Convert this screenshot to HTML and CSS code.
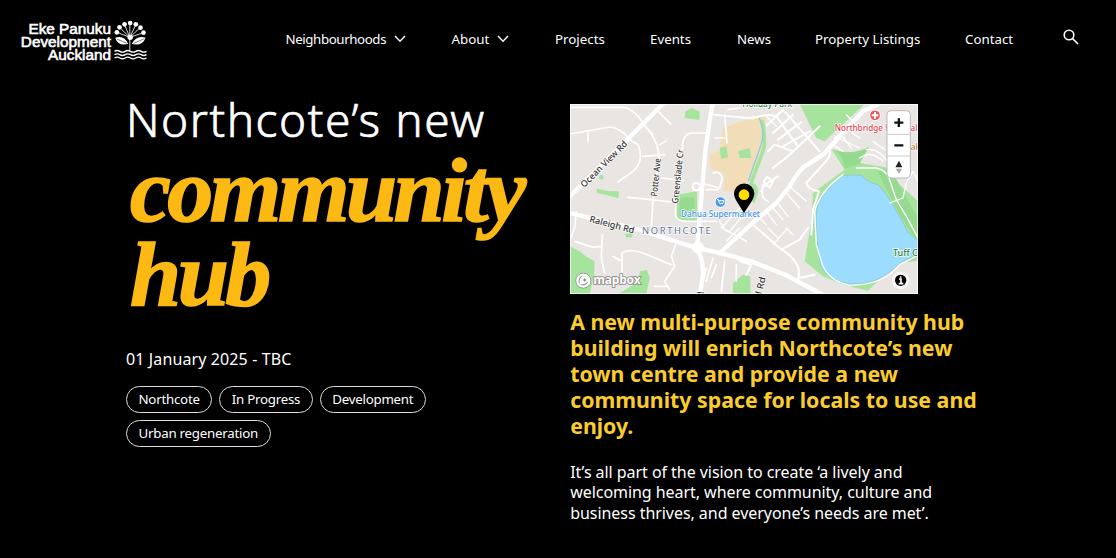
FILE: index.html
```html
<!DOCTYPE html>
<html lang="en">
<head>
<meta charset="utf-8">
<title>Northcote’s new community hub</title>
<link rel="stylesheet" href="styles.css">
</head>
<body>
<header class="header">
  <a class="logo">
    <span class="logo-text">Eke Panuku<br>Development<br>Auckland</span>
    <svg class="logo-mark" viewBox="344 60 98 120" fill="none" stroke="#fff">
      <g stroke-width="2.5"><path d="M391 150V112M391 112L353 97M391 112L361 83M391 112L375 74M391 112V70M391 112L409 74M391 112L422 83M391 112L432 98"/></g>
      <g fill="#fff" stroke="none"><circle cx="352" cy="97" r="7"/><circle cx="360" cy="82" r="7"/><circle cx="375" cy="73" r="7"/><circle cx="392" cy="69" r="7"/><circle cx="409" cy="73" r="7"/><circle cx="423" cy="83" r="7"/><circle cx="432" cy="98" r="7"/><circle cx="392" cy="112" r="8"/>
      <path d="M347 113Q375 105 386 132Q355 139 347 113ZM438 113Q410 105 397 132Q429 139 438 113Z"/></g>
      <path stroke="#000" stroke-width="1.5" d="M352 117L382 130M433 117L402 130"/>
      <g stroke-width="4"><path id="wave" d="M345 154Q353 149 361 154T377 154T393 154T409 154T425 154T441 154"/><use href="#wave" y="10"/><use href="#wave" y="20"/></g>
    </svg>
  </a>
  <nav class="nav">
    <a><span class="nav-long">Neighbourhoods</span> <svg class="chevron" viewBox="0 0 12 8"><path d="M1 1L6 6.3L11 1"/></svg></a>
    <a>About <svg class="chevron" viewBox="0 0 12 8"><path d="M1 1L6 6.3L11 1"/></svg></a>
    <a>Projects</a>
    <a>Events</a>
    <a>News</a>
    <a>Property Listings</a>
    <a>Contact</a>
  </nav>
  <svg class="search" viewBox="0 0 16 16"><circle cx="6" cy="6" r="4.8"/><path d="M9.6 9.6L15 15"/></svg>
</header>
<main class="hero">
  <section class="intro">
    <h1 class="title"><span class="title-top">Northcote’s new</span><em class="title-accent">community<br>hub</em></h1>
    <p class="date">01 January 2025 - TBC</p>
    <ul class="tags"><li>Northcote</li><li>In Progress</li><li>Development</li><li>Urban regeneration</li></ul>
  </section>
  <section class="details">
    <svg class="map" viewBox="31 28 1044 570">
      <rect x="31" y="28" width="1044" height="570" fill="#e9e5e3"/>
      <g fill="#f1deb9"><path d="M490 100L545 80L620 60L605 200L560 265L520 290L490 290L495 240L450 220L450 180L480 165Z"/></g>
      <g fill="#a6e39c">
        <path d="M378 50L398 40L420 52L419 76L375 70Z"/><path d="M352 300L412 290L412 380L352 375Z"/>
        <path d="M110 282L150 290L178 290L176 310L112 294Z"/><circle cx="125" cy="248" r="7"/><path d="M198 416h20v12h-20z"/>
        <path d="M31 455L60 470L78 485L105 500L103 545L90 598L31 598Z"/><path d="M176 598L230 565L242 530L262 526L270 550L260 598Z"/>
        <path d="M480 160L500 154L505 188L485 193ZM535 170L570 160L575 190L540 190Z"/>
        <path d="M720 28H915L795 140L770 130Z"/><path d="M815 163Q880 185 930 155L900 205L990 220L1020 270L1075 320V440L1070 500L1010 505L925 588L850 570L790 545L735 500L755 380L760 295L855 225Z"/>
        <path d="M520 565L550 540L572 545V598H520Z"/>
        <path d="M600 80Q618 115 604 170L570 260L562 310L585 325L596 290L590 270L580 265L619 160Q622 100 610 75Z"/>
      </g>
      <g fill="#95da8e"><path d="M815 163Q850 175 855 222L900 207L925 160Q870 185 815 163ZM955 232L990 220L1075 370V445L1020 360Z"/><path d="M360 308h44v56h-44z"/></g>
      <path d="M599 70Q617 115 604 150L566 260" fill="none" stroke="#8dccdf" stroke-width="4"/>
      <path d="M775 330Q785 295 850 242L905 241Q925 265 955 270Q995 315 1010 350Q1030 380 1043 410L1075 440V480Q1030 495 1010 515Q960 570 870 568Q800 555 782 510Q768 420 770 360Z" fill="#9cddff" stroke="#87bce0" stroke-width="2"/>
      <g fill="none" stroke="#fff" stroke-linecap="round" stroke-linejoin="round">
        <g stroke-width="5">
          <path d="M31 38H190Q225 42 255 92Q300 140 298 200L290 260L280 320L275 395M258 98L280 120M300 150L320 138M290 45L333 88M31 118L150 97Q185 100 210 135L235 150Q255 200 220 230L175 262M85 108V140M250 185L315 180M305 250L370 258M440 115H390Q365 125 368 170L350 260L347 360Q350 380 380 380H470M205 308L340 322M50 350L45 400L31 435M128 420L125 490L135 535M45 440L100 458L126 455M348 450L335 485L345 515L315 560L330 585M187 535V475Q210 460 250 475L335 510M187 500L160 485M285 575H325M495 500L485 590M530 510V560"/>
          <path d="M460 60L580 72M495 60L502 145M466 130H495M505 45L540 40M460 235Q480 225 488 250L480 280L425 265M440 285H475M480 380L495 405L525 420L560 440M440 520L430 560M460 490L440 560M470 510L455 550"/>
        </g>
        <g stroke-width="6"><path d="M545 70L590 68Q625 55 650 65L715 155M622 92L670 45L780 170M640 115L700 60M655 135L725 82M670 155L750 110M690 180L780 95M625 170L645 150L700 170M640 220L690 180M610 270Q600 310 625 320M655 245Q610 270 605 290M612 262l10-15 18 12-10 20zM810 170Q815 185 790 210L740 265Q745 285 778 290L760 345L755 420M580 390L660 460Q715 495 718 530L715 565M665 465L720 435L745 400M540 500L575 510L560 540M718 550L765 540"/></g>
        <g stroke-width="4"><path d="M805 160L835 130L900 160M825 130L860 100L900 130M860 60L900 100M890 220H950Q980 225 990 255L1010 315L1040 365L1075 430M850 240Q780 290 765 350L770 450L788 510Q810 560 870 572Q970 572 1020 510L1075 482M990 325L1030 310L1040 265L1060 230L1075 260M900 190Q935 165 970 200M920 165Q960 160 985 205"/>
        <path d="M620 350L650 390M635 335L670 375M650 320L685 365M680 295L720 340M695 280L740 320M590 360L620 390M510 410L560 350M485 400L540 340M500 440L540 400M640 450L680 405M655 430L625 400M680 400L700 420M820 150L850 170M845 120L875 160M940 140L975 165M620 65L650 95"/></g>
        <g stroke-width="13"><path d="M31 305L310 28M31 355L220 400L395 455L500 480L575 500L680 542L785 598"/><path d="M458 28L438 160L424 320L412 460Q430 490 430 540L421 598"/><path d="M480 475L590 375L650 325L690 275Q710 240 730 218L790 180L910 50L955 28"/></g>
        <circle cx="410" cy="276" r="11" stroke-width="6"/><circle cx="415" cy="459" r="12" fill="#fff" stroke-width="12"/>
      </g>
      <g class="map-label road">
        <text transform="translate(74 280) rotate(-45)" textLength="185" lengthAdjust="spacingAndGlyphs">Ocean View Rd</text>
        <text transform="translate(292 306) rotate(-84)" textLength="115" lengthAdjust="spacingAndGlyphs">Potter Ave</text>
        <text transform="translate(355 327) rotate(-84)" textLength="162" lengthAdjust="spacingAndGlyphs">Greenslade Cr</text>
        <text transform="translate(88 381) rotate(15)" textLength="138" lengthAdjust="spacingAndGlyphs">Raleigh Rd</text>
        <text transform="translate(603 611) rotate(-76)" textLength="64" lengthAdjust="spacingAndGlyphs">d Rd</text>
        <text x="411" y="612">Th</text>
      </g>
      <text class="map-label suburb" x="247" y="418" textLength="206">NORTHCOTE</text>
      <text class="map-label place" x="364" y="368" textLength="237" lengthAdjust="spacingAndGlyphs">Dahua Supermarket</text>
      <text class="map-label park" x="548" y="37" textLength="149" lengthAdjust="spacingAndGlyphs">Holiday Park</text>
      <text class="map-label park" x="1000" y="485">Tuff Cr</text>
      <text class="map-label hospital" x="825" y="110" textLength="248" lengthAdjust="spacingAndGlyphs">Northbridge Hospital</text>
      <text class="map-label cafe" x="1038" y="167">Lake</text>
      <circle cx="482" cy="322" r="16" fill="#469be4" stroke="#fff" stroke-width="3"/><path d="M472 315h4l3 11h11l3-8h-16M481 330h1M489 330h1" fill="none" stroke="#fff" stroke-width="3"/>
      <circle cx="946" cy="62" r="16" fill="#e95762" stroke="#fff" stroke-width="3"/><path d="M946 52V72M936 62H956" stroke="#fff" stroke-width="6"/>
      <path d="M553 355L530 318Q523 307 523 297A30 30 0 0 1 584 297Q584 307 577 318Z" fill="#000"/><circle cx="553" cy="300" r="16" fill="#ffe000"/>
      <g><rect x="982" y="48" width="70" height="202" rx="12" fill="#fff" stroke="#bbb" stroke-width="3"/><path d="M983 119H1051M983 184H1051" stroke="#ccc" stroke-width="3"/><path d="M1004 84H1031M1017.500 71V97M1004 152H1031" stroke="#111" stroke-width="7"/><path d="M1007 218L1018 198L1028 218Z" fill="#222"/><path d="M1008 222H1027L1018 237Z" fill="#aaa"/></g>
      <circle cx="1023" cy="557" r="26" fill="#fff" opacity=".7"/><circle cx="1023" cy="557" r="17" fill="#000"/><path d="M1018 553H1024V567M1017 567H1031M1023 545V549" fill="none" stroke="#fff" stroke-width="5"/>
      <g><circle cx="71" cy="558" r="18" fill="#999" fill-opacity=".6" stroke="#888" stroke-width="11"/><circle cx="71" cy="558" r="18" fill="none" stroke="#fff" stroke-width="7"/><path d="M61 568Q57 554 65 548A12 12 0 1 1 80 564Q73 570 61 568Z" fill="#fff"/><path d="M75 549l2 5 5 2-5 2-2 5-2-5-5-2 5-2z" fill="#888"/><text class="mapbox" x="101" y="568" textLength="142">mapbox</text></g>
      <rect x="32" y="29" width="1042" height="568" fill="none" stroke="#fff" stroke-width="2"/>
    </svg>
    <h2 class="lead">A new multi-purpose community hub<br>building will enrich Northcote’s new<br>town centre and provide a new<br>community space for locals to use and<br>enjoy.</h2>
    <p class="body-copy">It’s all part of the vision to create ‘a lively and<br>welcoming heart, where community, culture and<br>business thrives, and everyone’s needs are met’.</p>
  </section>
</main>
</body>
</html>
```
FILE: styles.css
```css
* { box-sizing: border-box; }
body { margin: 0; height: 558px; overflow: hidden; background: #000; color: #fff; font-family: "Noto Sans", "Open Sans", sans-serif; }
h1, h2, p, ul { margin: 0; padding: 0; font-weight: 400; }
.header { display: flex; height: 78px; align-items: flex-start; }
.logo { display: flex; width: 265.500px; padding: 20px 0 0 18px; gap: 3px; }
.logo-text { width: 93px; text-align: right; font: 15.300px/13px "Liberation Sans", Arial, sans-serif; -webkit-text-stroke: .600px #fff; padding-top: 2px; white-space: nowrap; }
.logo-mark { width: 33px; height: 40px; }
.nav { display: grid; grid-template-columns: 166px 103.500px 95px 87px 78px 150px 98px; width: 777.500px; padding: 29px 0 0 20px; font-size: 13.300px; line-height: 20px; white-space: nowrap; }
.nav a { display: flex; gap: 8px; align-items: center; }
.nav-long { letter-spacing: -.400px; }
.chevron { width: 12px; height: 8px; fill: none; stroke: #fff; stroke-width: 1.400; }
.search { width: 16px; height: 16px; margin: 29px 0 0 20px; fill: none; stroke: #fff; stroke-width: 1.600; }
.hero { display: grid; grid-template-columns: 444.200px 1fr; padding: 0 0 0 126px; }
.title { display: flex; flex-direction: column; white-space: nowrap; }
.title-top { font-size: 46px; line-height: 60px; font-weight: 300; margin-top: 11px; letter-spacing: 1.550px; -webkit-text-stroke: .700px #fff; }
.title-accent { font: italic bold 92px/84px "Liberation Serif", "Times New Roman", serif; color: #fdb913; letter-spacing: -3.500px; margin: -1px 0 0 4px; -webkit-text-stroke: 1.600px #fdb913; }
.date { margin-top: 32px; font-size: 16px; line-height: 22px; letter-spacing: .120px; }
.tags { display: flex; flex-wrap: wrap; gap: 7px; width: 310px; margin-top: 16px; list-style: none; font-size: 13.300px; line-height: 25px; letter-spacing: -.240px; }
.tags li { height: 27px; border: 1px solid #ddd; border-radius: 14px; padding: 0 11.500px; }
.map { display: block; width: 348px; height: 190px; margin-top: 26px; }
.map-label { font-family: "Noto Sans", sans-serif; font-size: 27px; stroke: #fff; stroke-width: 4px; paint-order: stroke; }
.road { fill: #333; font-weight: 500; }
.suburb { fill: #617196; font-size: 28px; }
.place { fill: #4292df; font-weight: 500; }
.park { fill: #2c7d35; font-weight: 500; }
.hospital { fill: #de4650; font-weight: 500; }
.cafe { fill: #b26a20; }
.mapbox { font: bold 36px "Open Sans", sans-serif; fill: #fff; stroke: #888; stroke-width: 5px; paint-order: stroke; }
.lead { margin-top: 15px; font-size: 21.300px; line-height: 26px; font-weight: 700; color: #fbcc2d; white-space: nowrap; }
.body-copy { margin-top: 22.500px; font-size: 16px; line-height: 20.700px; letter-spacing: -.050px; white-space: nowrap; }
```
